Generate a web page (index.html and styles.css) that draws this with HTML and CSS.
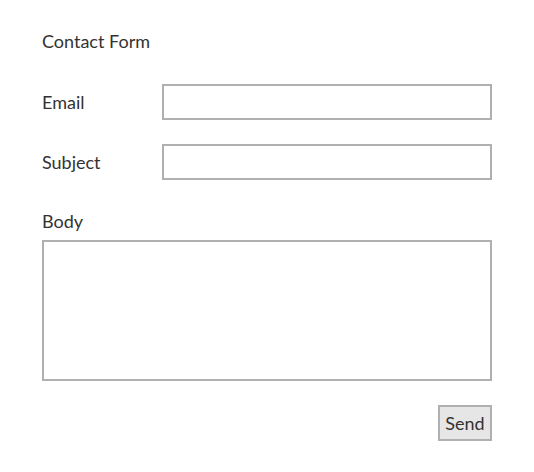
FILE: index.html
```html
<!DOCTYPE html>
<html>
<head>
<meta charset="utf-8">
<link rel="stylesheet" href="styles.css">
</head>
<body>
<form class="form">
  <div class="title">Contact Form</div>
  <div class="row">
    <label class="label">Email</label>
    <input class="field" type="text">
  </div>
  <div class="row">
    <label class="label">Subject</label>
    <input class="field" type="text">
  </div>
  <div class="body-block">
    <label class="label">Body</label>
    <textarea class="area"></textarea>
  </div>
  <div class="actions">
    <button type="button" class="send">Send</button>
  </div>
</form>
</body>
</html>
```
FILE: styles.css
```css
html, body {
  margin: 0;
  padding: 0;
  background: #ffffff;
}
body {
  font-family: Lato, "Liberation Sans", sans-serif;
  font-size: 18px;
  color: #333333;
}
.form {
  width: 450px;
  padding: 30px 42px;
  display: flex;
  flex-direction: column;
}
.title {
  line-height: 22px;
  margin-bottom: 32px;
}
.row {
  display: flex;
  align-items: center;
  height: 36px;
  margin-bottom: 24px;
}
.label {
  display: block;
  line-height: 22px;
}
.row .label {
  width: 120px;
  flex: none;
}
.field {
  flex: 1;
  height: 36px;
  box-sizing: border-box;
  border: 2px solid #b0b0b0;
  margin: 0;
  padding: 4px 6px;
  font: inherit;
  outline: none;
}
.body-block {
  display: flex;
  flex-direction: column;
  gap: 8px;
  margin-top: 6px;
}
.area {
  display: block;
  width: 450px;
  height: 141px;
  box-sizing: border-box;
  border: 2px solid #b0b0b0;
  margin: 0;
  resize: none;
  font: inherit;
  outline: none;
}
.actions {
  display: flex;
  justify-content: flex-end;
  margin-top: 24px;
}
.send {
  font: inherit;
  color: #333333;
  background: #e6e6e6;
  border: 2px solid #b0b0b0;
  height: 36px;
  width: 54px;
  padding: 0;
  margin: 0;
}
```
